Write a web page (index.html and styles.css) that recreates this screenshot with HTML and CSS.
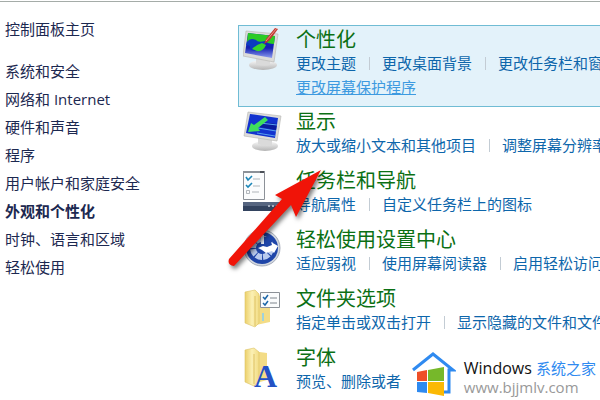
FILE: index.html
```html
<!DOCTYPE html>
<html lang="zh-CN">
<head>
  <meta charset="utf-8">
  <title>外观和个性化</title>
  <link rel="stylesheet" href="styles.css">
</head>
<body>
  <div class="window">
    <nav class="sidebar">
      <a class="home" href="#">控制面板主页</a>
      <a href="#">系统和安全</a>
      <a href="#">网络和 Internet</a>
      <a href="#">硬件和声音</a>
      <a href="#">程序</a>
      <a href="#">用户帐户和家庭安全</a>
      <a class="current" href="#">外观和个性化</a>
      <a href="#">时钟、语言和区域</a>
      <a href="#">轻松使用</a>
    </nav>

    <main class="content">
      <section class="item selected">
        <svg class="icon" viewBox="0 0 40 44">
          <defs>
            <linearGradient id="screen" x1="0" y1="0" x2="0" y2="1">
              <stop offset="0" stop-color="#0a2fd0"/>
              <stop offset="0.6" stop-color="#1420b0"/>
              <stop offset="1" stop-color="#8c9cf0"/>
            </linearGradient>
            <linearGradient id="stand" x1="0" y1="0" x2="0" y2="1">
              <stop offset="0" stop-color="#fafafa"/>
              <stop offset="1" stop-color="#b4b4b4"/>
            </linearGradient>
            <linearGradient id="folder" x1="0" y1="0" x2="1" y2="0">
              <stop offset="0" stop-color="#ecd06a"/>
              <stop offset="0.5" stop-color="#fbf0b4"/>
              <stop offset="1" stop-color="#f2dc84"/>
            </linearGradient>
          </defs>
          <ellipse cx="20" cy="37" rx="14" ry="5" fill="url(#stand)"/>
          <path d="M13 29l14 2v6q-8 2-14-1z" fill="#dadada"/>
          <path d="M3 3l32 3-4 28L0 28z" fill="#dcdcda" stroke="#b4b4b0" stroke-width="0.6"/>
          <path d="M5 5l27 3-3 22L2 25z" fill="url(#screen)"/>
          <path d="M5 5l27 3-1 8q-6 0-9-3-3 3-7 2-5-4-11-1z" fill="#2bcb25"/>
          <path d="M4 14q3-5 9-2 2 3 9 1l-1 5q-6 0-6 4-7 2-8-2 1-3-4-3z" fill="#0b3bc0"/>
          <path d="M9 21q4-4 10-6l4 2q-3 7-9 6z" fill="#35d52c"/>
          <path d="M32 0l3 1-9 12-5 3 2-5z" fill="#c23831"/>
          <path d="M34 0L23 13" stroke="#f0a8a0" stroke-width="0.8"/>
        </svg>
        <div class="text">
          <h2>个性化</h2>
          <div class="links"><a href="#">更改主题</a><a href="#">更改桌面背景</a><a href="#">更改任务栏和窗口的颜色</a></div>
          <div class="links"><a class="hover" href="#">更改屏幕保护程序</a></div>
        </div>
      </section>

      <section class="item">
        <svg class="icon" viewBox="0 0 40 44">
          <ellipse cx="22" cy="36" rx="13" ry="5" fill="url(#stand)"/>
          <path d="M15 27l14 2v6q-8 2-14-1z" fill="#dadada"/>
          <path d="M5 2l33 4-4 25L1 26z" fill="#dcdcda" stroke="#b4b4b0" stroke-width="0.6"/>
          <path d="M7 4l28 4-3 20L3 23z" fill="#1233cf"/>
          <path d="M20 12l14 2-1 6-17-3z" fill="#0a1c9c"/>
          <path d="M17 13l17 2M15 18l18 3M14 23l18 3" stroke="#58a0f0"/>
          <path d="M22 7l3 3-10 8 2 3-12 1 3-9 3 2z" fill="#3fe05c"/>
        </svg>
        <div class="text">
          <h2>显示</h2>
          <div class="links"><a href="#">放大或缩小文本和其他项目</a><a href="#">调整屏幕分辨率</a></div>
        </div>
      </section>

      <section class="item">
        <svg class="icon" viewBox="0 0 40 44">
          <path d="M0.5 2.5h21v28h-21z" fill="#fbfcfd" stroke="#8c9198"/>
          <path d="M0 3h22" stroke="#8c9198" stroke-width="2"/>
          <path d="M17 3h4" stroke="#4c5158" stroke-width="2"/>
          <path d="M3 8l2 3 4-4M3 16l2 2 4-4" fill="none" stroke="#1c86b8" stroke-width="1.6"/>
          <path d="M3.5 21.500h3v3h-3z" fill="none" stroke="#a0a5ab" stroke-width="0.8"/>
          <path d="M10 10h7M10 17h7M9 23h7" stroke="#b0b5ba"/>
          <path d="M0 33h40v9H0z" fill="#33435f"/>
          <path d="M0 33h40v4H0z" fill="#566580"/>
          <path d="M25 36h2v2h-2zM29 36h2v2h-2zM33 36h2v2h-2z" fill="#a7b0c0"/>
        </svg>
        <div class="text">
          <h2>任务栏和导航</h2>
          <div class="links"><a href="#">导航属性</a><a href="#">自定义任务栏上的图标</a></div>
        </div>
      </section>

      <section class="item">
        <svg class="icon" viewBox="0 0 40 44">
          <circle cx="19" cy="20" r="18" fill="#d3d8e0" stroke="#98a0ae" stroke-width="0.8"/>
          <circle cx="19" cy="20" r="16" fill="#1f45a8"/>
          <circle cx="19" cy="20" r="9" fill="none" stroke="#b9cbee" stroke-width="6" stroke-dasharray="6 1"/>
          <path d="M20 19V9h9v6h5v5h-8z" fill="#1f45a8"/>
          <path d="M18 6l3 1v9h-3z" fill="#e6eefb"/>
          <path d="M15 20l5-2 4 1 5-2-1-3 7 4-4 7-2-2-6 2-4-3z" fill="#fff"/>
        </svg>
        <div class="text">
          <h2>轻松使用设置中心</h2>
          <div class="links"><a href="#">适应弱视</a><a href="#">使用屏幕阅读器</a><a href="#">启用轻松访问键</a></div>
        </div>
      </section>

      <section class="item">
        <svg class="icon" viewBox="0 0 40 44">
          <path d="M13 8l14 2v25l-14 3z" fill="#f3dc86"/>
          <path d="M2 5l10-2 4 4v29l-4 4L2 36z" fill="url(#folder)" stroke="#dcc264" stroke-width="0.6"/>
          <path d="M12 9v30" stroke="#d8b854" stroke-width="0.8"/>
          <path d="M17.500 5.500h19v15h-19z" fill="#fbfcfd" stroke="#8c9198"/>
          <path d="M20 10l2 2 3-4M20 16l2 2 3-4" fill="none" stroke="#1c66a8" stroke-width="1.5"/>
          <path d="M27 11h7M27 16h7" stroke="#7f868e"/>
          <path d="M20 26v8" stroke="#9fd2dc" stroke-width="2"/>
        </svg>
        <div class="text">
          <h2>文件夹选项</h2>
          <div class="links"><a href="#">指定单击或双击打开</a><a href="#">显示隐藏的文件和文件夹</a></div>
        </div>
      </section>

      <section class="item">
        <svg class="icon" viewBox="0 0 40 44">
          <path d="M10 5l14 2v27l-14 4z" fill="#f3dc86"/>
          <path d="M2 4l9-2 5 4v29l-5 5-9-4z" fill="url(#folder)" stroke="#dcc264" stroke-width="0.6"/>
          <path d="M11 8v30" stroke="#d8b854" stroke-width="0.8"/>
          <text class="letter" x="11" y="41">A</text>
        </svg>
        <div class="text">
          <h2>字体</h2>
          <div class="links"><a href="#">预览、删除或者</a></div>
        </div>
      </section>
    </main>
  </div>

  <svg class="arrow" viewBox="0 0 100 104">
    <path d="M94 3L48 28l7 4L2 92q-2 6 5 7L64 38l5 12z" fill="#f01408"/>
  </svg>

  <div class="watermark">
    <svg viewBox="0 0 44 44">
      <path d="M1 18L21 2l20 16h-4v22h-5" fill="none" stroke="#2f8af0" stroke-width="3"/>
      <path d="M5 20l10-2v11H5z" fill="#ee4f28"/>
      <path d="M16 18l16-3v14H16z" fill="#76b82a"/>
      <path d="M5 30h10v11L5 40z" fill="#2f8af0"/>
      <path d="M16 30h16v14l-16-3z" fill="#fbb904"/>
    </svg>
    <div>
      <p class="brand">Windows <span>系统之家</span></p>
      <p class="url">www.bjjmlv.com</p>
    </div>
  </div>
</body>
</html>
```

FILE: styles.css
```css
body {
  margin: 0;
  background-color: #fff;
  font-family: "Open Sans", "Noto Sans CJK SC", sans-serif;
  font-size: 15px;
  overflow: hidden;
}

a {
  color: #0d66ab;
  text-decoration: none;
}

.window {
  display: flex;
  margin-top: 1px;
  border-top: 1px solid #a5aca8;
}

.sidebar {
  display: flex;
  flex-direction: column;
  flex: 0 0 233px;
  padding: 13px 0 0 5px;
  line-height: 28px;
}

.sidebar a {
  color: #1c2850;
}

.sidebar .home {
  margin-bottom: 14px;
}

.sidebar .current {
  font-weight: bold;
}

.content {
  flex: 1;
  min-width: 0;
  padding-top: 23px;
}

.item {
  display: flex;
  gap: 13px;
  padding: 2px 0 8px 4px;
  border: 1px solid transparent;
  border-right: 0;
}

.item.selected {
  padding-bottom: 7px;
  background-color: #e3f2fa;
  border-color: #70bcd4;
}

.icon {
  flex: none;
  width: 40px;
  height: 44px;
  margin-bottom: -4px;
}

.letter {
  fill: #2452c4;
  font-family: "Liberation Serif", serif;
  font-size: 32px;
  font-weight: bold;
}

.text {
  min-width: 0;
  white-space: nowrap;
}

h2 {
  margin: 0;
  color: #0b7014;
  font-size: 20px;
  font-weight: normal;
  line-height: 23px;
}

.links {
  display: flex;
  align-items: center;
  height: 24px;
  line-height: 24px;
}

.links a + a::before {
  content: "";
  display: inline-block;
  width: 1px;
  height: 13px;
  margin: 0 12px 0 13px;
  background-color: #c3ccd4;
  vertical-align: -1px;
}

.links .hover {
  color: #3d9ae0;
  text-decoration: underline;
}

.arrow {
  position: absolute;
  left: 227px;
  top: 167px;
  width: 100px;
  height: 104px;
  overflow: visible;
  filter: drop-shadow(2px 3px 2px rgba(0, 0, 0, 0.5));
}

.watermark {
  position: fixed;
  right: 0;
  bottom: 0;
  display: flex;
  gap: 8px;
  padding: 4px 4px 4px 8px;
  background-color: #fff;
  white-space: nowrap;
}

.watermark svg {
  width: 44px;
  height: 44px;
}

.watermark p {
  margin: 0;
}

.brand {
  padding-top: 6px;
  color: #111;
  font-size: 16px;
  line-height: 20px;
}

.brand span {
  color: #2f8af0;
  font-size: 15px;
}

.url {
  color: #999;
  font-size: 15px;
  line-height: 18px;
}
```
